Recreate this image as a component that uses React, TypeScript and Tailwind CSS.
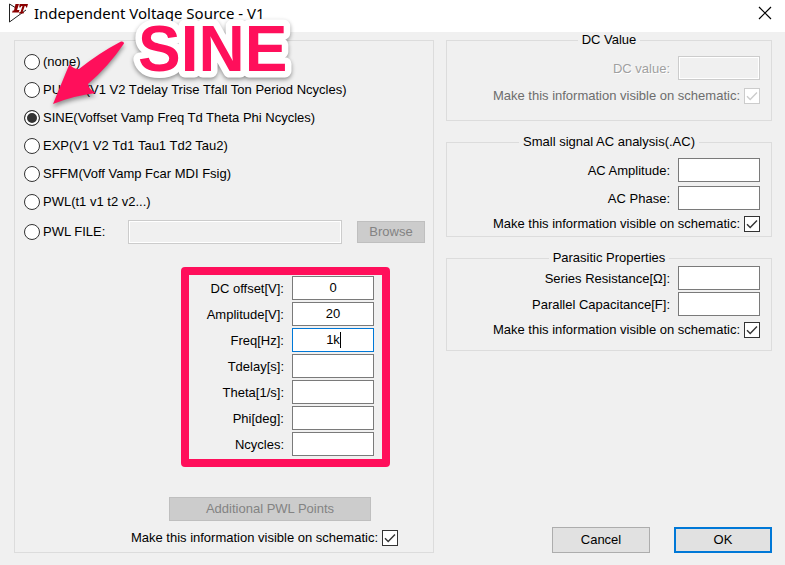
import React, { forwardRef, InputHTMLAttributes } from 'react';
import { cva, type VariantProps } from 'class-variance-authority';
import { clsx } from 'clsx';

const fieldVariants = cva(
  'block h-6 border px-1 pb-0.5 text-center text-[13px] leading-5 outline-none',
  {
    variants: {
      variant: {
        default: 'border-[#7a7a7a] bg-white focus:border-[#0078d7]',
        disabled: 'border-[#cccccc] bg-[#f0f0f0] shadow-[inset_0_0_0_1px_#ffffff]',
      },
      width: {
        value: 'w-[82px] shrink-0',
        full: 'w-full min-w-0',
      },
    },
    defaultVariants: { variant: 'default', width: 'value' },
  }
);

interface FieldProps
  extends Omit<InputHTMLAttributes<HTMLInputElement>, 'width'>,
    Pick<VariantProps<typeof fieldVariants>, 'width'> {}

const Field = forwardRef<HTMLInputElement, FieldProps>(
  ({ className, width, disabled, ...props }, ref) => (
    <input
      ref={ref}
      type="text"
      disabled={disabled}
      className={clsx(
        fieldVariants({ variant: disabled ? 'disabled' : 'default', width }),
        className
      )}
      {...props}
    />
  )
);

Field.displayName = 'Field';

const buttonVariants = cva('text-center text-[13px] leading-5', {
  variants: {
    variant: {
      default: 'h-[26px] w-[98px] border border-[#adadad] bg-[#e1e1e1]',
      primary: 'h-[26px] w-[98px] border-2 border-[#0078d7] bg-[#e1e1e1]',
      disabled: 'border border-[#bfbfbf] bg-[#cccccc] text-[#838383]',
    },
  },
  defaultVariants: { variant: 'default' },
});

interface FieldRowProps {
  id: string;
  label: string;
  value?: string;
  disabled?: boolean;
  autoFocus?: boolean;
}

const FieldRow = ({ id, label, value = '', disabled, autoFocus }: FieldRowProps) => (
  <div className="flex items-center justify-end gap-2">
    <label
      htmlFor={id}
      className={clsx(
        'pt-0.5 whitespace-nowrap',
        disabled && 'text-[#a0a0a0] [text-shadow:1px_1px_0_#ffffff]'
      )}
    >
      {label}
    </label>
    <div className="relative">
      <Field
        id={id}
        defaultValue={value}
        disabled={disabled}
        autoFocus={autoFocus}
        className={clsx(autoFocus && 'peer caret-transparent')}
      />
      {/* Steady caret after the value */}
      {autoFocus && (
        <span className="pointer-events-none absolute top-1 left-1/2 ml-[7px] hidden h-4 w-px bg-black peer-focus:block" />
      )}
    </div>
  </div>
);

const VisibleCheck = ({ id, disabled }: { id: string; disabled?: boolean }) => (
  <div className="flex items-center justify-end gap-1">
    <label htmlFor={id} className={clsx('whitespace-nowrap', disabled && 'text-[#6d6d6d]')}>
      Make this information visible on schematic:
    </label>
    <span className="relative size-4 shrink-0">
      <input
        id={id}
        type="checkbox"
        defaultChecked
        disabled={disabled}
        className={clsx(
          'peer block size-4 appearance-none border bg-white',
          disabled ? 'border-[#cccccc]' : 'border-[#333333]'
        )}
      />
      <svg
        viewBox="0 0 16 16"
        className={clsx(
          'pointer-events-none absolute inset-0 hidden size-4 peer-checked:block',
          disabled ? 'text-[#cccccc]' : 'text-[#333333]'
        )}
        fill="none"
        stroke="currentColor"
        strokeWidth="1.4"
      >
        <path d="M3 8.2l3.2 3.2L13 4.6" />
      </svg>
    </span>
  </div>
);

const Group = ({
  title,
  className,
  children,
}: {
  title: string;
  className?: string;
  children: React.ReactNode;
}) => (
  <fieldset className={clsx('min-w-0 border border-[#dcdcdc]', className)}>
    <legend className="mx-auto px-1 leading-4">{title}</legend>
    <div className="pr-[11px]">{children}</div>
  </fieldset>
);

const functions = [
  { id: 'none', label: '(none)' },
  { id: 'pulse', label: 'PULSE(V1 V2 Tdelay Trise Tfall Ton Period Ncycles)' },
  { id: 'sine', label: 'SINE(Voffset Vamp Freq Td Theta Phi Ncycles)' },
  { id: 'exp', label: 'EXP(V1 V2 Td1 Tau1 Td2 Tau2)' },
  { id: 'sffm', label: 'SFFM(Voff Vamp Fcar MDI Fsig)' },
  { id: 'pwl', label: 'PWL(t1 v1 t2 v2...)' },
];

const sineParams = [
  { id: 'offset', label: 'DC offset[V]:', value: '0' },
  { id: 'amplitude', label: 'Amplitude[V]:', value: '20' },
  { id: 'freq', label: 'Freq[Hz]:', value: '1k', autoFocus: true },
  { id: 'tdelay', label: 'Tdelay[s]:' },
  { id: 'theta', label: 'Theta[1/s]:' },
  { id: 'phi', label: 'Phi[deg]:' },
  { id: 'ncycles', label: 'Ncycles:' },
];

const FunctionRadio = ({ id, label }: { id: string; label: string }) => (
  <div className="flex items-center gap-[3px]">
    <input
      id={id}
      type="radio"
      name="function"
      defaultChecked={id === 'sine'}
      className="size-4 shrink-0 appearance-none rounded-full border border-[#333333] bg-white checked:bg-[#333333] checked:shadow-[inset_0_0_0_2px_#ffffff]"
    />
    <label htmlFor={id} className="whitespace-nowrap">
      {label}
    </label>
  </div>
);

const AppIcon = () => (
  <svg viewBox="0 0 20 20" className="mb-1.5 size-5" fill="none">
    <path d="M8 5L1.500 1v18L18 7" stroke="#222222" />
    <path d="M7.500 1H11L9 7h2.500l-.8 2.500H4l.8-2H6z" fill="#8b0000" />
    <path d="M11.500 1H20l-1 3.500h-1l-.3-1.500h-1l-2 6h1.300l-.5 1.500h-4.500l.5-1.500h1l2-6h-1l-1.200 1.500h-1z" fill="#8b0000" />
  </svg>
);

// Pink callout: label plus the arrow pointing at the selected function
const Callout = () => (
  <svg
    width="310"
    height="115"
    viewBox="0 0 310 115"
    className="pointer-events-none absolute top-0 left-0"
  >
    <path
      d="M53 104L69.500 64Q72.500 69 79 69Q99 53 121 41.500Q124 41 124 43.500Q108 67 88 84Q89 90 96 93Q74 95.500 53 104Z"
      fill="#ff0f5b"
      className="drop-shadow-[0_3px_2px_rgba(0,0,0,0.4)]"
    />
    <text
      x="138"
      y="71"
      fill="#ff0f5b"
      stroke="#ffffff"
      strokeWidth="13"
      strokeLinejoin="round"
      paintOrder="stroke"
      className="text-[64px] font-bold drop-shadow-[0_2px_2px_rgba(0,0,0,0.4)]"
    >
      SINE
    </text>
  </svg>
);

export default function App() {
  return (
    <div className="relative min-h-screen bg-[#f0f0f0] font-['Liberation_Sans',Arial,sans-serif] text-[13px] leading-4 text-black">
      <header className="flex h-8 items-center bg-white pr-[13px] pl-2">
        <AppIcon />
        <h1 className="ml-1.5 flex-1 pb-1.5 font-['Noto_Sans',sans-serif] text-[15px] leading-5">
          Independent Voltage Source - V1
        </h1>
        <button type="button" aria-label="Close" className="mb-1.5">
          <svg viewBox="0 0 14 14" className="size-3.5" stroke="#000000" strokeWidth="1.2">
            <path d="M1 1l12 12M13 1L1 13" />
          </svg>
        </button>
      </header>

      <main className="flex gap-3 pr-[13px] pb-3 pl-3.5">
        <section className="mt-2 min-w-0 flex-[409] border border-[#dcdcdc] pt-[13px] pb-1.5 pl-[9px]">
          <div className="flex flex-col gap-3">
            {functions.map((fn) => (
              <FunctionRadio key={fn.id} {...fn} />
            ))}
          </div>
          <div className="mt-2.5 flex items-center pr-2">
            <div className="w-[104px] shrink-0">
              <FunctionRadio id="pwlfile" label="PWL FILE:" />
            </div>
            <Field aria-label="PWL file" width="full" disabled />
            <button
              type="button"
              disabled
              className={clsx(
                buttonVariants({ variant: 'disabled' }),
                'ml-[15px] h-[22px] w-[68px] shrink-0'
              )}
            >
              Browse
            </button>
          </div>

          <div className="mt-[23px] mr-[43px] ml-auto flex w-[209px] flex-col gap-0.5 rounded border-8 border-[#ff0f5b] pt-px pr-2 pb-[3px]">
            {sineParams.map((param) => (
              <FieldRow key={param.id} {...param} />
            ))}
          </div>

          <div className="mt-[30px] flex flex-col gap-[9px]">
            <button
              type="button"
              disabled
              className={clsx(
                buttonVariants({ variant: 'disabled' }),
                'mr-[62px] ml-auto h-6 w-[202px]'
              )}
            >
              Additional PWL Points
            </button>
            <div className="pr-[35px]">
              <VisibleCheck id="visible-function" />
            </div>
          </div>
        </section>

        <section className="flex min-w-0 flex-[326] flex-col">
          <Group title="DC Value" className="pb-4">
            <div className="flex flex-col gap-2 pt-2">
              <FieldRow id="dc-value" label="DC value:" disabled />
              <VisibleCheck id="visible-dc" disabled />
            </div>
          </Group>

          <Group title="Small signal AC analysis(.AC)" className="mt-[13px] pb-1">
            <div className="flex flex-col gap-1 pt-2">
              <FieldRow id="ac-amplitude" label="AC Amplitude:" />
              <FieldRow id="ac-phase" label="AC Phase:" />
              <div className="pt-0.5">
                <VisibleCheck id="visible-ac" />
              </div>
            </div>
          </Group>

          <Group title="Parasitic Properties" className="mt-[13px] pb-3">
            <div className="flex flex-col gap-0.5">
              <FieldRow id="series-resistance" label="Series Resistance[Ω]:" />
              <FieldRow id="parallel-capacitance" label="Parallel Capacitance[F]:" />
              <div className="pt-1">
                <VisibleCheck id="visible-parasitic" />
              </div>
            </div>
          </Group>

          <div className="mt-auto flex justify-end gap-6">
            <button type="button" className={buttonVariants()}>
              Cancel
            </button>
            <button type="button" className={buttonVariants({ variant: 'primary' })}>
              OK
            </button>
          </div>
        </section>
      </main>

      <Callout />
    </div>
  );
}
